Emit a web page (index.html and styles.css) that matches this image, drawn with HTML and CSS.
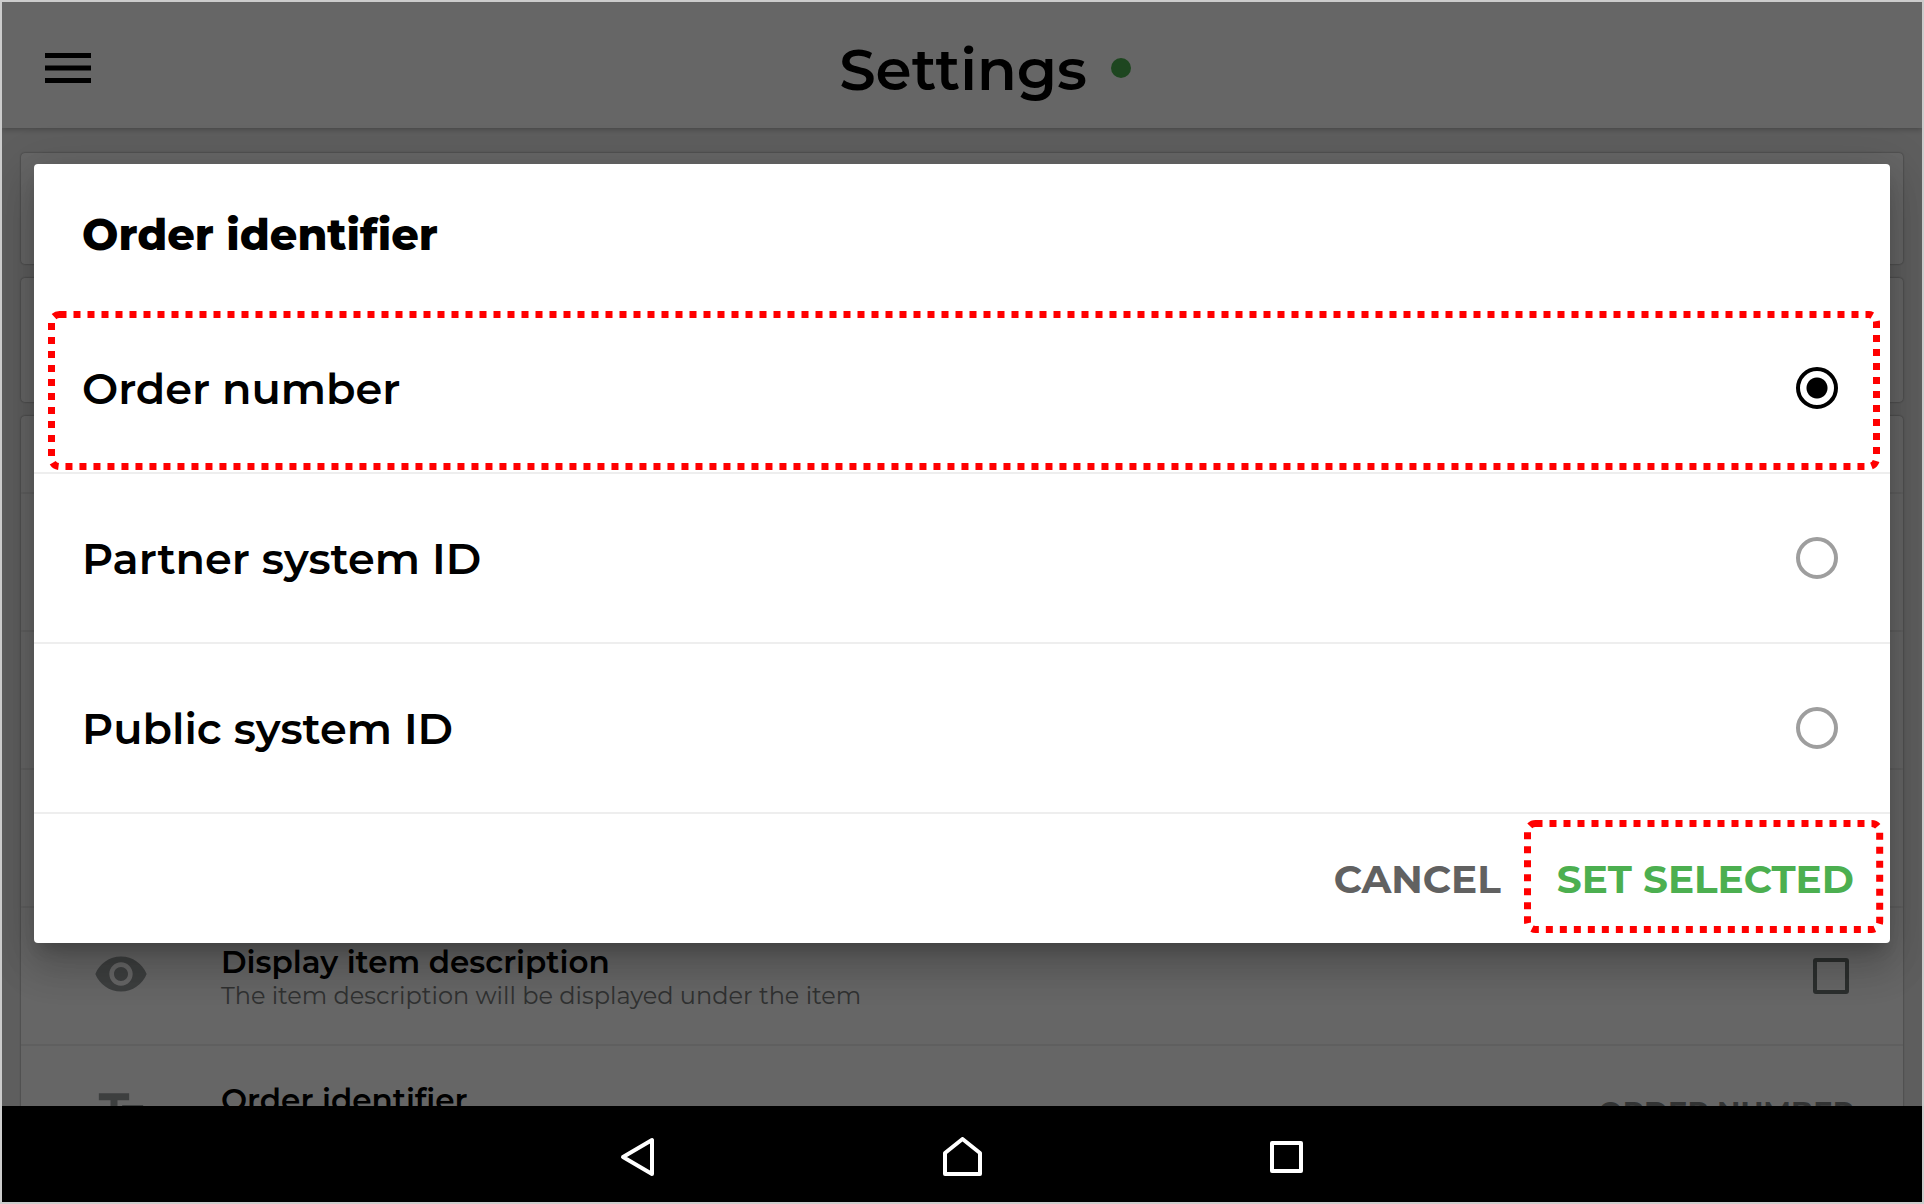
FILE: index.html
```html
<!DOCTYPE html>
<html lang="en">
<head>
  <meta charset="utf-8">
  <meta name="viewport" content="width=device-width, initial-scale=1">
  <title>Settings</title>
  <link rel="stylesheet" href="styles.css">
</head>
<body>
  <div class="device">
    <div class="app">
      <header class="app-bar">
        <button class="menu-button" type="button" aria-label="Menu">
          <svg viewBox="0 0 46 30" width="46" height="30"><path d="M0 0h46v5H0zM0 12.500h46v5H0zM0 25h46v5H0z"/></svg>
        </button>
        <div class="heading">
          <h1>Settings</h1>
          <span class="status-dot"></span>
        </div>
      </header>
      <main class="settings">
        <section class="card card-short"></section>
        <section class="card card-medium"></section>
        <section class="card card-list">
          <div class="list-header"></div>
          <div class="row"></div>
          <div class="row"></div>
          <div class="row"></div>
          <div class="row">
            <svg class="row-icon" viewBox="0 0 24 24"><path d="M12 4.500C7 4.500 2.730 7.610 1 12c1.730 4.390 6 7.500 11 7.500s9.270-3.110 11-7.500c-1.730-4.390-6-7.500-11-7.500zM12 17c-2.760 0-5-2.240-5-5s2.240-5 5-5 5 2.240 5 5-2.240 5-5 5zm0-8c-1.660 0-3 1.340-3 3s1.340 3 3 3 3-1.340 3-3-1.340-3-3-3z"/></svg>
            <label class="row-text" for="item-description">
              <span class="row-title">Display item description</span>
              <span class="row-note">The item description will be displayed under the item</span>
            </label>
            <input class="checkbox" type="checkbox" id="item-description">
          </div>
          <div class="row">
            <svg class="row-icon" viewBox="0 0 24 24"><path d="M2.500 4v3h5v12h3V7h5V4h-13zm19 5h-9v3h3v7h3v-7h3V9z"/></svg>
            <div class="row-text">
              <span class="row-title">Order identifier</span>
              <span class="row-note"></span>
            </div>
            <span class="row-value">ORDER NUMBER</span>
          </div>
        </section>
      </main>
      <div class="scrim">
        <form class="dialog" role="dialog" aria-labelledby="dialog-title">
          <h2 class="dialog-title" id="dialog-title">Order identifier</h2>
          <label class="option">
            <span>Order number</span>
            <input class="radio" type="radio" name="identifier" checked>
            <svg class="highlight highlight-option" aria-hidden="true"><rect x="3.500" y="3.500" rx="8"/></svg>
          </label>
          <label class="option">
            <span>Partner system ID</span>
            <input class="radio" type="radio" name="identifier">
          </label>
          <label class="option">
            <span>Public system ID</span>
            <input class="radio" type="radio" name="identifier">
          </label>
          <div class="actions">
            <button class="action" type="button">CANCEL</button>
            <button class="action action-primary" type="button">SET SELECTED
              <svg class="highlight highlight-action" aria-hidden="true"><rect x="3.500" y="3.500" rx="8"/></svg>
            </button>
          </div>
        </form>
      </div>
    </div>
    <nav class="system-bar">
      <button type="button" aria-label="Back"><svg viewBox="0 0 40 40" width="40" height="40"><path d="M34 3v34L5 20z"/></svg></button>
      <button type="button" aria-label="Home"><svg viewBox="0 0 40 40" width="40" height="40"><path d="M3 37V16L20.500 2 38 16v21z"/></svg></button>
      <button type="button" aria-label="Recent apps"><svg viewBox="0 0 40 40" width="40" height="40"><path d="M6 6h29v28H6z"/></svg></button>
    </nav>
  </div>
</body>
</html>
```
FILE: styles.css
```css
* {
  box-sizing: border-box;
}

body {
  margin: 0;
  font-family: Montserrat, Inter, "Liberation Sans", sans-serif;
  font-weight: 600;
  color: #000;
}

h1,
h2 {
  margin: 0;
}

button {
  margin: 0;
  padding: 0;
  border: 0;
  background: none;
  font: inherit;
  color: inherit;
}

svg {
  display: block;
}

.device {
  display: flex;
  flex-direction: column;
  height: 100vh;
  border: 2px solid #ccc;
}

.app {
  position: relative;
  flex: 1;
  min-height: 0;
  overflow: hidden;
  background: #ebebeb;
}

.app-bar {
  position: relative;
  display: flex;
  align-items: center;
  height: 126px;
  padding: 6px 43px 0;
  background: #fff;
  box-shadow: 0 1px 6px rgba(0, 0, 0, 0.3);
}

.heading {
  display: flex;
  flex: 1;
  align-items: center;
  justify-content: center;
  gap: 24px;
}

.heading h1 {
  padding-top: 4px;
  font-size: 58px;
  font-weight: 600;
  line-height: 72px;
}

.status-dot {
  width: 20px;
  height: 20px;
  border-radius: 50%;
  background: #4caf50;
}

.settings {
  display: flex;
  flex-direction: column;
  gap: 14px;
  padding: 25px 19px;
}

.card {
  border-radius: 4px;
  background: #fff;
  box-shadow: 0 0 2px rgba(0, 0, 0, 0.5);
}

.card-short {
  height: 111px;
}

.card-medium {
  height: 124px;
}

.list-header {
  height: 78px;
  border-bottom: 2px solid #eee;
}

.row {
  display: flex;
  align-items: center;
  height: 138px;
  padding: 0 49px 0 72px;
  border-bottom: 2px solid #eee;
}

.row-icon {
  width: 56px;
  height: 56px;
  margin: 0 72px 4px 0;
  fill: #999d9f;
}

.row-text {
  display: flex;
  flex: 1;
  flex-direction: column;
  padding-top: 4px;
}

.row-title {
  font-size: 31px;
  line-height: 36px;
}

.row-note {
  min-height: 32px;
  font-size: 24px;
  font-weight: 400;
  line-height: 32px;
  color: #787b7b;
}

.row-value {
  padding-bottom: 4px;
  font-size: 29px;
  font-weight: 700;
  color: #7d8080;
}

.checkbox {
  appearance: none;
  width: 36px;
  height: 36px;
  margin: 0 5px 0 0;
  border: 4px solid #6e7573;
  border-radius: 3px;
}

.scrim {
  position: absolute;
  inset: 0;
  display: flex;
  align-items: center;
  padding: 0 32px 1px;
  background: rgba(0, 0, 0, 0.6);
}

.dialog {
  width: 100%;
  border-radius: 4px;
  background: #fff;
  box-shadow:
    0 11px 15px -7px rgba(0, 0, 0, 0.2),
    0 24px 38px 3px rgba(0, 0, 0, 0.14),
    0 9px 46px 8px rgba(0, 0, 0, 0.12);
}

.dialog-title {
  padding: 2px 48px 0;
  font-size: 43px;
  font-weight: 800;
  line-height: 138px;
}

.option {
  position: relative;
  display: flex;
  align-items: center;
  justify-content: space-between;
  height: 170px;
  padding: 0 52px 0 48px;
  border-bottom: 2px solid #eee;
  font-size: 43px;
}

.radio {
  appearance: none;
  width: 42px;
  height: 42px;
  margin: 0;
  border: 4px solid #9e9e9e;
  border-radius: 50%;
}

.radio:checked {
  border-color: #000;
  background: radial-gradient(circle, #000 10px, transparent 11px);
}

.actions {
  display: flex;
  align-items: center;
  justify-content: flex-end;
  gap: 56px;
  height: 129px;
  padding: 0 36px;
}

.action {
  position: relative;
  font-size: 39px;
  font-weight: 700;
  line-height: 48px;
  color: #616161;
}

.action-primary {
  color: #4caf50;
}

.highlight {
  position: absolute;
  overflow: visible;
}

.highlight rect {
  width: calc(100% - 7px);
  height: calc(100% - 7px);
  fill: none;
  stroke: #f00;
  stroke-width: 7px;
  stroke-dasharray: 7px 7px;
}

.highlight-option {
  top: 7px;
  left: 14px;
  width: calc(100% - 24px);
  height: 159px;
}

.highlight-action {
  top: -35px;
  left: -33px;
  width: calc(100% + 62px);
  height: 113px;
}

.system-bar {
  display: flex;
  align-items: center;
  justify-content: center;
  gap: 284px;
  height: 96px;
  padding-top: 6px;
  background: #000;
}

.system-bar svg {
  fill: none;
  stroke: #fff;
  stroke-width: 4px;
  stroke-linejoin: round;
}
```
